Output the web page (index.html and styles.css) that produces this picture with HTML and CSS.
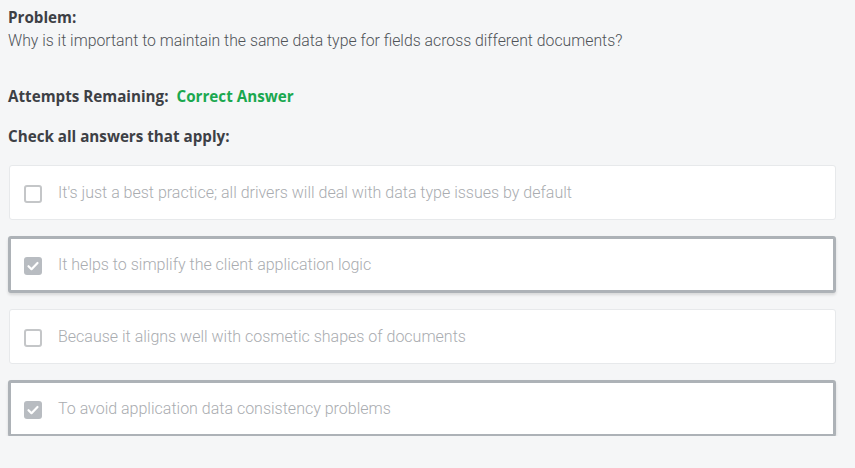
FILE: index.html
```html
<!DOCTYPE html>
<html>
<head>
<meta charset="utf-8">
<link rel="stylesheet" href="styles.css">
</head>
<body>
<div class="page">
  <div class="label">Problem:</div>
  <div class="question">Why is it important to maintain the same data type for fields across different documents?</div>
  <div class="attempts"><span class="label">Attempts Remaining:</span> <span class="correct">Correct Answer</span></div>
  <div class="label check-label">Check all answers that apply:</div>
  <div class="options">
    <div class="option">
      <span class="box"></span>
      <span class="text">It's just a best practice; all drivers will deal with data type issues by default</span>
    </div>
    <div class="option selected">
      <span class="box checked"><svg viewBox="0 0 18 18" width="18" height="18"><path d="M4.5 9.2l3 3 6-6.2" fill="none" stroke="#fff" stroke-width="2.2" stroke-linecap="round" stroke-linejoin="round"/></svg></span>
      <span class="text">It helps to simplify the client application logic</span>
    </div>
    <div class="option">
      <span class="box"></span>
      <span class="text">Because it aligns well with cosmetic shapes of documents</span>
    </div>
    <div class="option selected">
      <span class="box checked"><svg viewBox="0 0 18 18" width="18" height="18"><path d="M4.5 9.2l3 3 6-6.2" fill="none" stroke="#fff" stroke-width="2.2" stroke-linecap="round" stroke-linejoin="round"/></svg></span>
      <span class="text">To avoid application data consistency problems</span>
    </div>
  </div>
</div>
</body>
</html>
```
FILE: styles.css
```css
html, body {
  margin: 0;
  padding: 0;
  background: #f5f6f7;
}
.page {
  padding: 7px 19px 0 8px;
  font-family: Roboto, "Liberation Sans", sans-serif;
}
.label {
  font-family: "Open Sans", "Liberation Sans", sans-serif;
  font-weight: 700;
  font-size: 15.2px;
  color: #3d4045;
  line-height: 20px;
}
.question {
  font-size: 15.8px;
  font-weight: 300;
  color: #4f5357;
  line-height: 20px;
  margin-top: 4px;
}
.attempts {
  margin-top: 35px;
  line-height: 20px;
  display: flex;
  gap: 8px;
}
.correct {
  font-family: "Open Sans", "Liberation Sans", sans-serif;
  font-weight: 700;
  font-size: 15.2px;
  color: #1aa84f;
}
.check-label {
  margin-top: 20px;
}
.options {
  margin-top: 19px;
  display: flex;
  flex-direction: column;
  gap: 17px;
}
.option {
  height: 55px;
  margin: 0 0 0 1px;
  background: #fff;
  border: 1px solid #e7e9eb;
  border-radius: 3px;
  display: flex;
  align-items: center;
  padding-left: 14px;
  box-sizing: border-box;
}
.option.selected {
  margin: -1px 0 -1px 0;
  height: 57px;
  border: 3px solid #adb2b7;
  padding-left: 13px;
  box-shadow: 0 2px 3px rgba(0,0,0,0.12);
}
.box {
  width: 18px;
  height: 18px;
  box-sizing: border-box;
  border: 2px solid #c4c6c8;
  border-radius: 3px;
  margin-top: 3px;
  flex: none;
  display: flex;
}
.box.checked {
  border: none;
  background: #b8bcc1;
}
.text {
  margin-left: 16px;
  font-size: 16px;
  font-weight: 300;
  color: #a9acb0;
}
```
